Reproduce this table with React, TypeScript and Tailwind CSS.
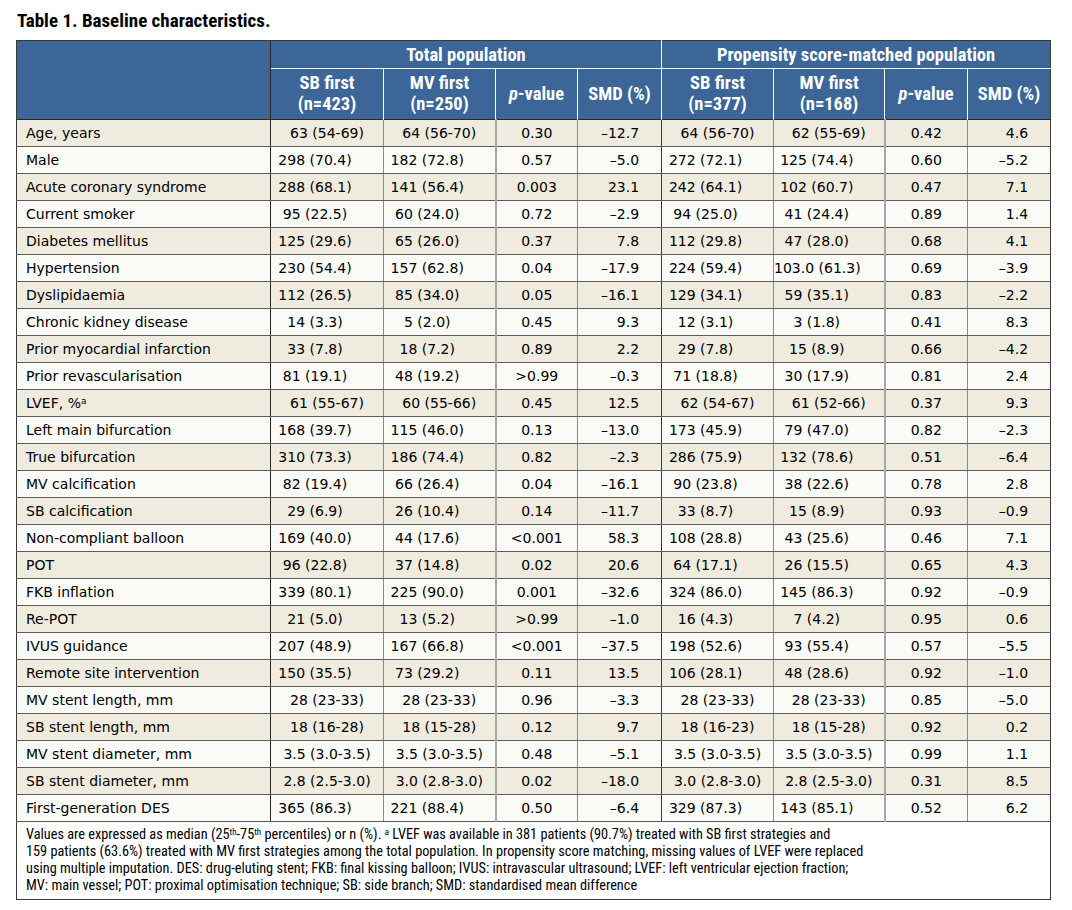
const COND = "font-['Roboto_Condensed','Liberation_Sans_Narrow',sans-serif]";

type Row = { label: React.ReactNode; kind: "m" | "n"; v: string[] };

const ROWS: Row[] = [
  { label: "Age, years", kind: "m", v: ["63 (54-69)", "64 (56-70)", "0.30", "–12.7", "64 (56-70)", "62 (55-69)", "0.42", "4.6"] },
  { label: "Male", kind: "n", v: ["298 (70.4)", "182 (72.8)", "0.57", "–5.0", "272 (72.1)", "125 (74.4)", "0.60", "–5.2"] },
  { label: "Acute coronary syndrome", kind: "n", v: ["288 (68.1)", "141 (56.4)", "0.003", "23.1", "242 (64.1)", "102 (60.7)", "0.47", "7.1"] },
  { label: "Current smoker", kind: "n", v: ["95 (22.5)", "60 (24.0)", "0.72", "–2.9", "94 (25.0)", "41 (24.4)", "0.89", "1.4"] },
  { label: "Diabetes mellitus", kind: "n", v: ["125 (29.6)", "65 (26.0)", "0.37", "7.8", "112 (29.8)", "47 (28.0)", "0.68", "4.1"] },
  { label: "Hypertension", kind: "n", v: ["230 (54.4)", "157 (62.8)", "0.04", "–17.9", "224 (59.4)", "103.0 (61.3)", "0.69", "–3.9"] },
  { label: "Dyslipidaemia", kind: "n", v: ["112 (26.5)", "85 (34.0)", "0.05", "–16.1", "129 (34.1)", "59 (35.1)", "0.83", "–2.2"] },
  { label: "Chronic kidney disease", kind: "n", v: ["14 (3.3)", "5 (2.0)", "0.45", "9.3", "12 (3.1)", "3 (1.8)", "0.41", "8.3"] },
  { label: "Prior myocardial infarction", kind: "n", v: ["33 (7.8)", "18 (7.2)", "0.89", "2.2", "29 (7.8)", "15 (8.9)", "0.66", "–4.2"] },
  { label: "Prior revascularisation", kind: "n", v: ["81 (19.1)", "48 (19.2)", ">0.99", "–0.3", "71 (18.8)", "30 (17.9)", "0.81", "2.4"] },
  {
    label: (
      <>
        LVEF, %<sup className="text-[9px]">a</sup>
      </>
    ),
    kind: "m",
    v: ["61 (55-67)", "60 (55-66)", "0.45", "12.5", "62 (54-67)", "61 (52-66)", "0.37", "9.3"],
  },
  { label: "Left main bifurcation", kind: "n", v: ["168 (39.7)", "115 (46.0)", "0.13", "–13.0", "173 (45.9)", "79 (47.0)", "0.82", "–2.3"] },
  { label: "True bifurcation", kind: "n", v: ["310 (73.3)", "186 (74.4)", "0.82", "–2.3", "286 (75.9)", "132 (78.6)", "0.51", "–6.4"] },
  { label: "MV calcification", kind: "n", v: ["82 (19.4)", "66 (26.4)", "0.04", "–16.1", "90 (23.8)", "38 (22.6)", "0.78", "2.8"] },
  { label: "SB calcification", kind: "n", v: ["29 (6.9)", "26 (10.4)", "0.14", "–11.7", "33 (8.7)", "15 (8.9)", "0.93", "–0.9"] },
  { label: "Non-compliant balloon", kind: "n", v: ["169 (40.0)", "44 (17.6)", "<0.001", "58.3", "108 (28.8)", "43 (25.6)", "0.46", "7.1"] },
  { label: "POT", kind: "n", v: ["96 (22.8)", "37 (14.8)", "0.02", "20.6", "64 (17.1)", "26 (15.5)", "0.65", "4.3"] },
  { label: "FKB inflation", kind: "n", v: ["339 (80.1)", "225 (90.0)", "0.001", "–32.6", "324 (86.0)", "145 (86.3)", "0.92", "–0.9"] },
  { label: "Re-POT", kind: "n", v: ["21 (5.0)", "13 (5.2)", ">0.99", "–1.0", "16 (4.3)", "7 (4.2)", "0.95", "0.6"] },
  { label: "IVUS guidance", kind: "n", v: ["207 (48.9)", "167 (66.8)", "<0.001", "–37.5", "198 (52.6)", "93 (55.4)", "0.57", "–5.5"] },
  { label: "Remote site intervention", kind: "n", v: ["150 (35.5)", "73 (29.2)", "0.11", "13.5", "106 (28.1)", "48 (28.6)", "0.92", "–1.0"] },
  { label: "MV stent length, mm", kind: "m", v: ["28 (23-33)", "28 (23-33)", "0.96", "–3.3", "28 (23-33)", "28 (23-33)", "0.85", "–5.0"] },
  { label: "SB stent length, mm", kind: "m", v: ["18 (16-28)", "18 (15-28)", "0.12", "9.7", "18 (16-23)", "18 (15-28)", "0.92", "0.2"] },
  { label: "MV stent diameter, mm", kind: "m", v: ["3.5 (3.0-3.5)", "3.5 (3.0-3.5)", "0.48", "–5.1", "3.5 (3.0-3.5)", "3.5 (3.0-3.5)", "0.99", "1.1"] },
  { label: "SB stent diameter, mm", kind: "m", v: ["2.8 (2.5-3.0)", "3.0 (2.8-3.0)", "0.02", "–18.0", "3.0 (2.8-3.0)", "2.8 (2.5-3.0)", "0.31", "8.5"] },
  { label: "First-generation DES", kind: "n", v: ["365 (86.3)", "221 (88.4)", "0.50", "–6.4", "329 (87.3)", "143 (85.1)", "0.52", "6.2"] },
];

const WIDTHS = [254, 113, 112, 82, 84, 112, 111, 83, 83];

function PValue() {
  return (
    <>
      <i>p</i>-value
    </>
  );
}

export default function App() {
  return (
    <div className="bg-white min-h-[910px] w-[1072px] text-black">
      <h1 className={`${COND} font-bold text-[19px] leading-[22px] pl-[17px] pt-[10px] h-[40px]`}>
        Table 1. Baseline characteristics.
      </h1>

      <table className="ml-[16px] w-[1034px] table-fixed border-collapse border border-[#3a3a3a]">
        <colgroup>
          {WIDTHS.map((w, i) => (
            <col key={i} style={{ width: w }} />
          ))}
        </colgroup>
        <thead className={`${COND} font-bold text-white text-[18.5px] bg-[#3c6697]`}>
          <tr className="h-[28px]">
            <th rowSpan={2} className="border-r border-b border-[#2a2a2a]" />
            <th colSpan={4} className="border-r border-b border-white font-bold leading-[20px]">
              Total population
            </th>
            <th colSpan={4} className="border-b border-white font-bold leading-[20px]">
              Propensity score-matched population
            </th>
          </tr>
          <tr className="h-[51px] leading-[21px] border-b border-[#2a2a2a]">
            <th className="border-r border-white font-bold">
              SB first
              <br />
              (n=423)
            </th>
            <th className="border-r border-white font-bold">
              MV first
              <br />
              (n=250)
            </th>
            <th className="border-r border-white font-bold">
              <PValue />
            </th>
            <th className="border-r border-white font-bold">SMD (%)</th>
            <th className="border-r border-white font-bold">
              SB first
              <br />
              (n=377)
            </th>
            <th className="border-r border-white font-bold">
              MV first
              <br />
              (n=168)
            </th>
            <th className="border-r border-white font-bold">
              <PValue />
            </th>
            <th className="font-bold">SMD (%)</th>
          </tr>
        </thead>
        <tbody className="font-['DejaVu_Sans',sans-serif] text-[14px]">
          {ROWS.map((r, i) => (
            <tr key={i} className={`h-[27px] ${i % 2 === 0 ? "bg-[#efebde]" : "bg-[#fafaf6]"}`}>
              <td className="pl-[9px] border-r border-b border-r-[#2a2a2a] border-b-[#5c5c5c] whitespace-nowrap leading-[16px]">
                {r.label}
              </td>
              {r.v.map((val, j) => {
                const isSmd = j === 3 || j === 7;
                const isP = j === 2 || j === 6;
                let align = "text-center";
                if (isSmd) align = "text-right pr-[22px]";
                else if (!isP && r.kind === "n") align = "text-center pr-[24px]";
                const rightBorder =
                  j === 7 ? "" : j === 3 ? "border-r border-r-[#3a3a3a]" : j === 1 || j === 5 ? "border-r-2 border-r-[#a9a9a9]" : "border-r border-r-[#8a8a8a]";
                return (
                  <td
                    key={j}
                    className={`${align} ${rightBorder} border-b border-b-[#5c5c5c] whitespace-nowrap leading-[16px]`}
                  >
                    {val}
                  </td>
                );
              })}
            </tr>
          ))}
          <tr className="bg-white">
            <td colSpan={9} className={`${COND} text-[14.3px] leading-[17px] pl-[9px] pt-[4px] pb-[5px]`}>
              Values are expressed as median (25<sup className="text-[9px]">th</sup>-75
              <sup className="text-[9px]">th</sup> percentiles) or n (%). <sup className="text-[9px]">a</sup> LVEF was
              available in 381 patients (90.7%) treated with SB first strategies and
              <br />
              159 patients (63.6%) treated with MV first strategies among the total population. In propensity score
              matching, missing values of LVEF were replaced
              <br />
              using multiple imputation. DES: drug-eluting stent; FKB: final kissing balloon; IVUS: intravascular
              ultrasound; LVEF: left ventricular ejection fraction;
              <br />
              MV: main vessel; POT: proximal optimisation technique; SB: side branch; SMD: standardised mean difference
            </td>
          </tr>
        </tbody>
      </table>
    </div>
  );
}
